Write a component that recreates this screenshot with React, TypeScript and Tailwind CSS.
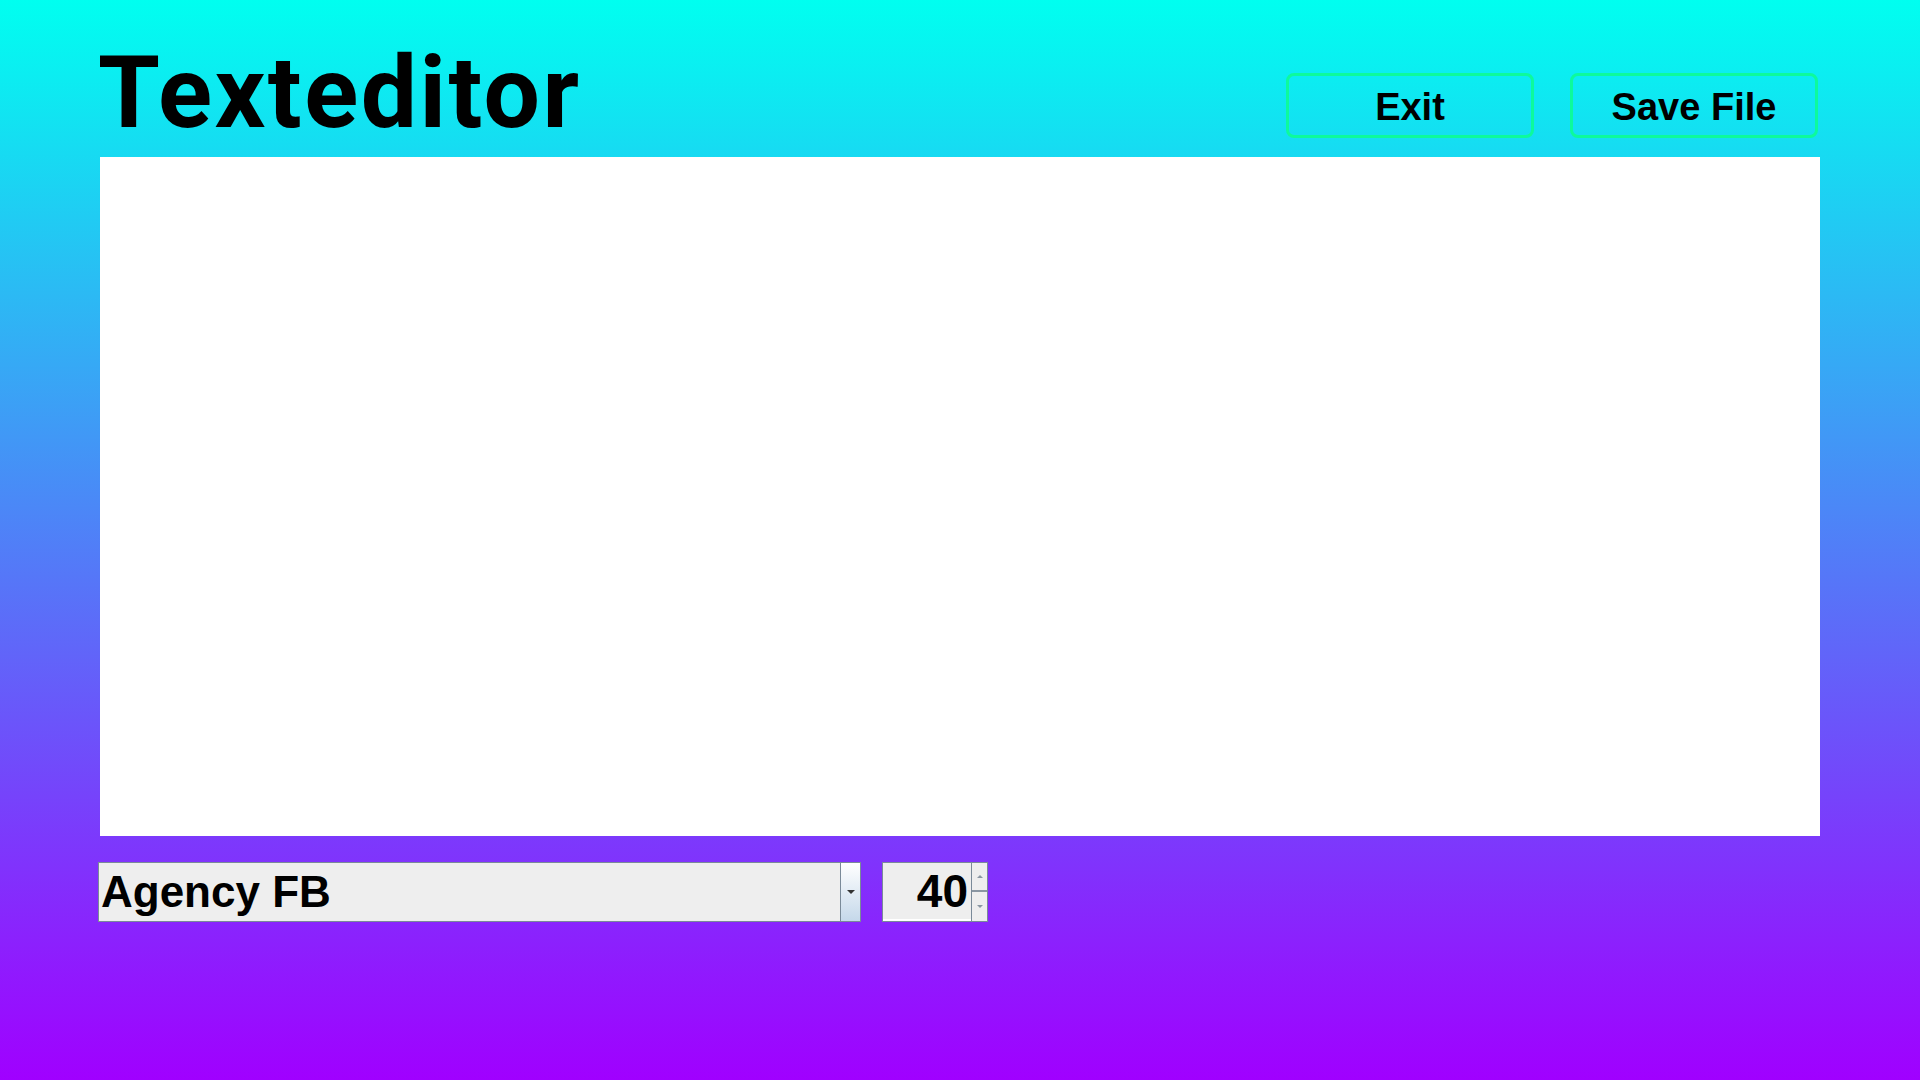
import React from "react";

export default function App() {
  return (
    <div className="w-[1920px] h-[1080px] bg-[linear-gradient(to_bottom,#00fff0,#a000ff)] overflow-hidden">
      <div className="h-[157px] flex items-start justify-between pl-[98px] pr-[102px]">
        <h1
          className="mt-[43px] text-[100px] leading-[100px] font-bold text-black tracking-[0.025em]"
          style={{ fontFamily: "Roboto, 'DejaVu Sans', sans-serif" }}
        >
          Texteditor
        </h1>
        <div className="mt-[73px] flex gap-[36px]">
          <button
            className="w-[248px] h-[65px] rounded-[8px] border-[3px] border-[#0dfa9c] pt-[3px] text-[38px] font-bold text-black flex items-center justify-center"
            style={{ fontFamily: "'Liberation Sans', Arial, sans-serif" }}
          >
            Exit
          </button>
          <button
            className="w-[248px] h-[65px] rounded-[8px] border-[3px] border-[#0dfa9c] pt-[3px] text-[38px] font-bold text-black flex items-center justify-center"
            style={{ fontFamily: "'Liberation Sans', Arial, sans-serif" }}
          >
            Save File
          </button>
        </div>
      </div>
      <div className="ml-[100px] w-[1720px] h-[679px] bg-white" />
      <div
        className="mt-[26px] ml-[98px] flex gap-[21px]"
        style={{ fontFamily: "'Liberation Sans', Arial, sans-serif" }}
      >
        <div className="w-[763px] h-[60px] border border-[#7a8a99] bg-[#eeeeee] flex">
          <div className="flex-1 flex items-center pl-[2px] text-[44px] font-bold text-black leading-none">
            Agency FB
          </div>
          <div className="w-[20px] h-full border-l border-[#7a8a99] bg-[linear-gradient(to_bottom,#ffffff,#c5d8ea)] flex items-center justify-center">
            <div className="w-0 h-0 border-l-[4px] border-r-[4px] border-t-[4px] border-l-transparent border-r-transparent border-t-[#333]" />
          </div>
        </div>
        <div className="w-[106px] h-[60px] border border-[#7a8a99] bg-[#eeeeee] flex">
          <div className="flex-1 flex items-center justify-end pr-[3px] text-[46px] font-bold text-black leading-none border-b-2 border-white">
            40
          </div>
          <div className="w-[16px] h-full border-l border-[#7a8a99] flex flex-col">
            <div className="h-[29px] border-b-2 border-[#8a96a2] flex items-center justify-center">
              <div className="w-0 h-0 border-l-[3px] border-r-[3px] border-b-[3px] border-l-transparent border-r-transparent border-b-[#8a96a2]" />
            </div>
            <div className="flex-1 flex items-center justify-center">
              <div className="w-0 h-0 border-l-[3px] border-r-[3px] border-t-[3px] border-l-transparent border-r-transparent border-t-[#8a96a2]" />
            </div>
          </div>
        </div>
      </div>
    </div>
  );
}
